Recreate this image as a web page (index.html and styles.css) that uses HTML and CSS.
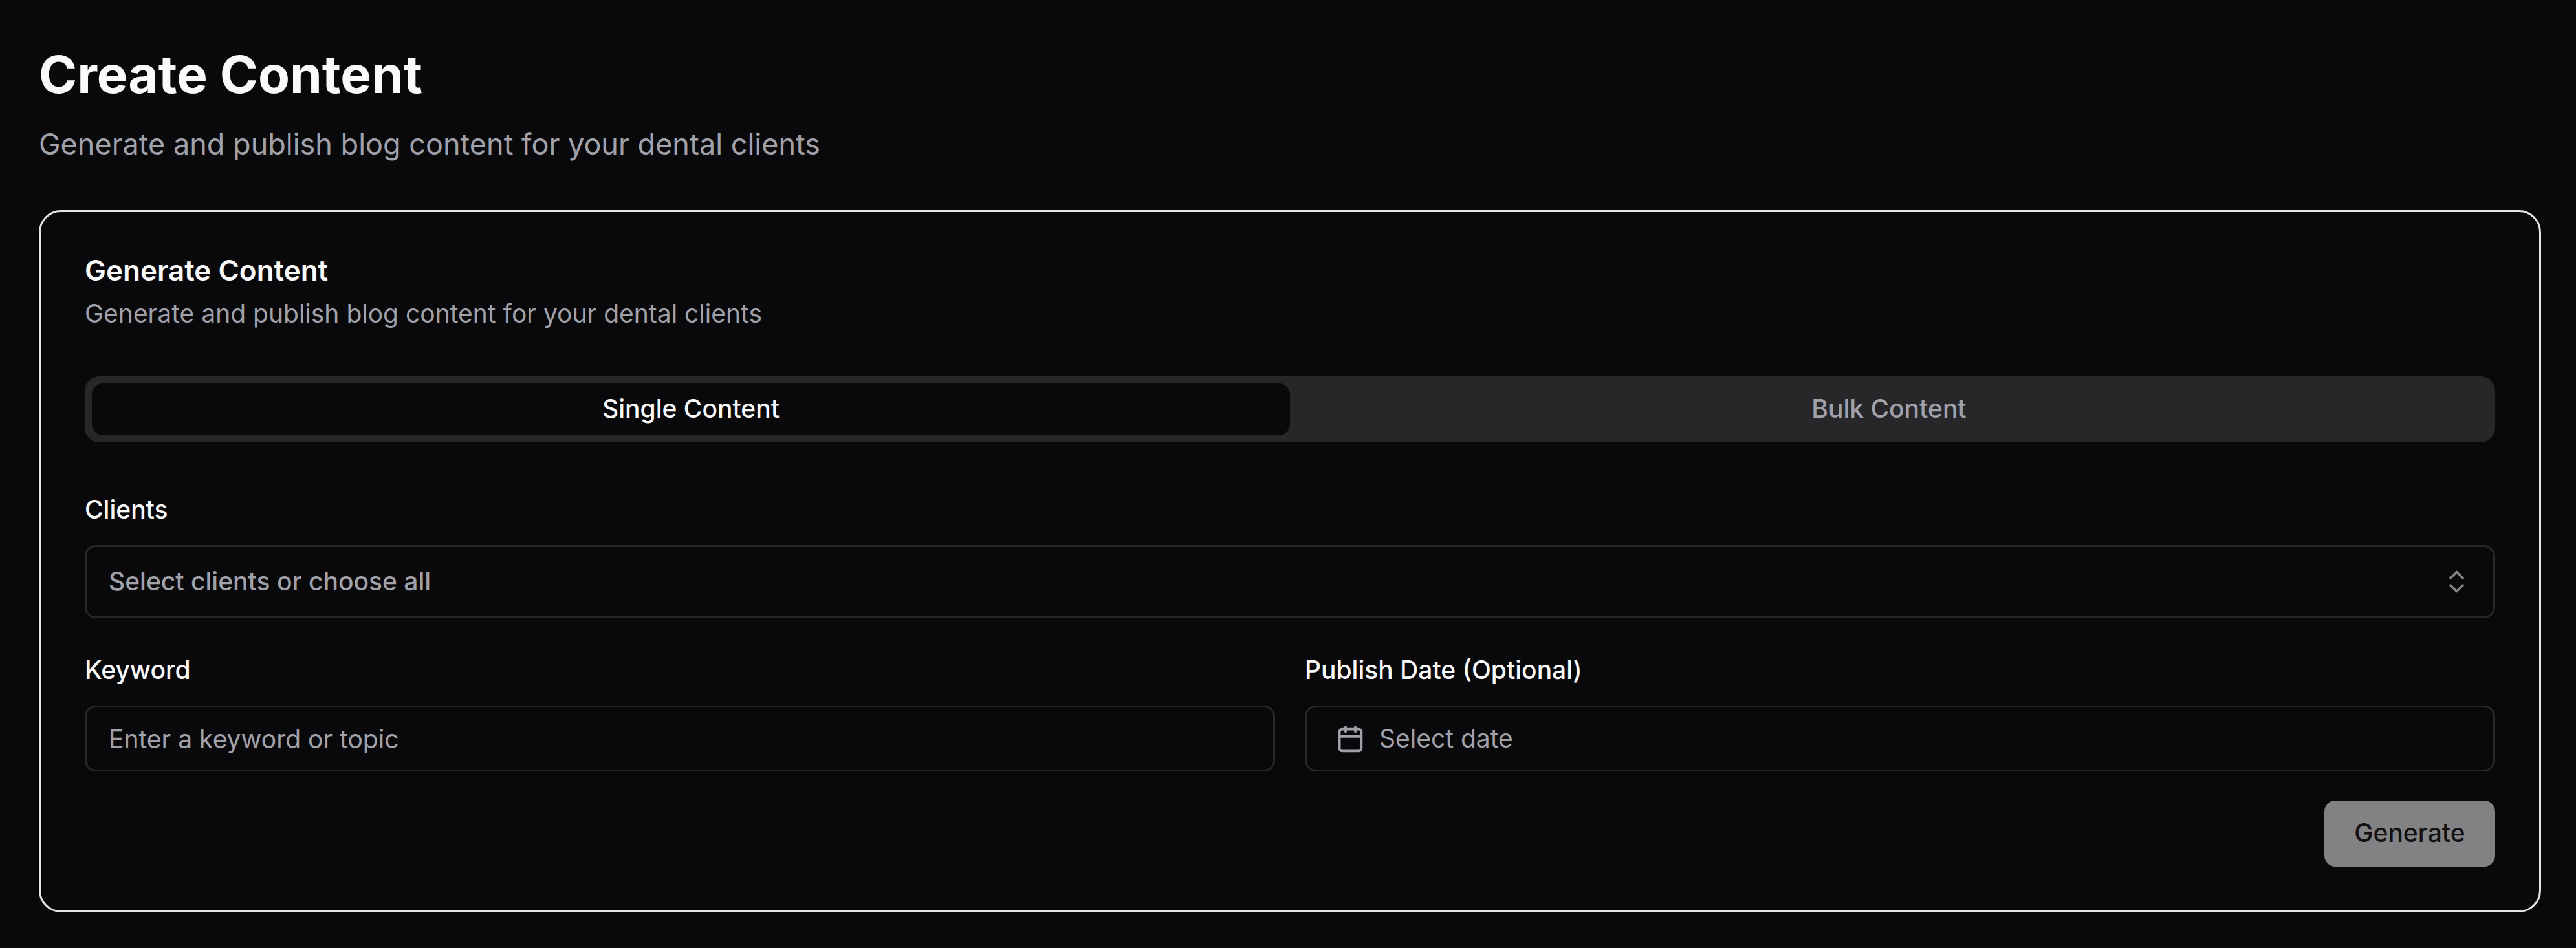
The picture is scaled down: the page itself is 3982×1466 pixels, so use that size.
FILE: index.html
```html
<!DOCTYPE html>
<html lang="en">
<head>
  <meta charset="utf-8">
  <meta name="viewport" content="width=device-width, initial-scale=1">
  <title>Create Content</title>
  <link rel="stylesheet" href="styles.css">
</head>
<body>
  <main class="page">
    <header class="page-header">
      <h1 class="page-title">Create Content</h1>
      <p class="page-subtitle">Generate and publish blog content for your dental clients</p>
    </header>

    <section class="card">
      <header class="card-header">
        <h2 class="card-title">Generate Content</h2>
        <p class="card-description">Generate and publish blog content for your dental clients</p>
      </header>

      <div class="tabs" role="tablist">
        <button class="tab tab-active" type="button" role="tab" aria-selected="true">Single Content</button>
        <button class="tab" type="button" role="tab" aria-selected="false">Bulk Content</button>
      </div>

      <form class="form">
        <div class="fields">
          <div class="field field-wide">
            <label class="label" for="clients">Clients</label>
            <div class="select">
              <select class="control select-input" id="clients">
                <option>Select clients or choose all</option>
              </select>
              <svg class="icon select-icon" viewBox="0 0 24 24" aria-hidden="true">
                <path d="m7 15 5 5 5-5"/>
                <path d="m7 9 5-5 5 5"/>
              </svg>
            </div>
          </div>

          <div class="field">
            <label class="label" for="keyword">Keyword</label>
            <input class="control" id="keyword" type="text" placeholder="Enter a keyword or topic">
          </div>

          <div class="field">
            <label class="label" for="publish-date">Publish Date (Optional)</label>
            <button class="control date-button" id="publish-date" type="button">
              <svg class="icon" viewBox="0 0 24 24" aria-hidden="true">
                <path d="M8 2v4"/>
                <path d="M16 2v4"/>
                <rect width="18" height="18" x="3" y="4" rx="2"/>
                <path d="M3 10h18"/>
              </svg>
              <span>Select date</span>
            </button>
          </div>
        </div>

        <div class="actions">
          <button class="submit" type="submit" disabled>Generate</button>
        </div>
      </form>
    </section>
  </main>
</body>
</html>
```
FILE: styles.css
```css
:root {
  --background: #09090b;
  --foreground: #fafafa;
  --muted: #27272a;
  --muted-foreground: #a1a1aa;
  --card-border: #e4e4e7;
}

*,
*::before,
*::after {
  box-sizing: border-box;
}

body {
  margin: 0;
  background: var(--background);
  color: var(--foreground);
  font-family: "Inter", "Liberation Sans", sans-serif;
  font-size: 39px;
  line-height: 56px;
}

h1,
h2,
p {
  margin: 0;
}

button,
input,
select {
  margin: 0;
  font: inherit;
  color: inherit;
}

.page {
  display: flex;
  flex-direction: column;
  gap: 68px;
  padding: 64px 54px 54px 60px;
}

.page-header {
  display: flex;
  flex-direction: column;
  gap: 23px;
}

.page-title {
  font-size: 80px;
  font-weight: 700;
  line-height: 102px;
}

.page-subtitle {
  color: var(--muted-foreground);
  font-size: 45px;
  line-height: 68px;
}

.card {
  display: flex;
  flex-direction: column;
  padding: 68px;
  border: 3px solid var(--card-border);
  border-radius: 34px;
}

.card-header {
  display: flex;
  flex-direction: column;
  gap: 17px;
  margin-bottom: 69px;
}

.card-title {
  font-size: 44px;
  font-weight: 600;
  line-height: 44px;
}

.card-description {
  color: var(--muted-foreground);
}

.tabs {
  display: grid;
  grid-template-columns: 1fr 1fr;
  margin-bottom: 84px;
  padding: 11px;
  border-radius: 22px;
  background: var(--muted);
}

.tab {
  height: 80px;
  padding: 0 34px 2px;
  border: 0;
  border-radius: 17px;
  background: transparent;
  color: var(--muted-foreground);
  font-weight: 500;
}

.tab-active {
  background: var(--background);
  color: var(--foreground);
}

.form {
  display: flex;
  flex-direction: column;
  gap: 45px;
}

.fields {
  display: grid;
  grid-template-columns: 1fr 1fr;
  gap: 60px 46px;
}

.field {
  display: flex;
  flex-direction: column;
  gap: 35px;
}

.field-wide {
  grid-column: 1 / -1;
}

.label {
  font-weight: 500;
  line-height: 40px;
}

.control {
  width: 100%;
  height: 102px;
  padding: 0 34px;
  border: 3px solid var(--muted);
  border-radius: 17px;
  background: transparent;
  color: var(--muted-foreground);
}

.control::placeholder {
  color: var(--muted-foreground);
  opacity: 1;
}

.select {
  display: grid;
  align-items: center;
}

.select-input,
.select-icon {
  grid-area: 1 / 1;
}

.select-input {
  height: 113px;
  padding-bottom: 2px;
  appearance: none;
  font-weight: 500;
}

.select-icon {
  justify-self: end;
  margin-right: 37px;
  color: var(--foreground);
  opacity: 0.5;
  pointer-events: none;
}

.date-button {
  display: flex;
  align-items: center;
  gap: 22px;
  padding: 0 45px;
  text-align: left;
}

.icon {
  flex: none;
  width: 45px;
  height: 45px;
  fill: none;
  stroke: currentColor;
  stroke-width: 2;
  stroke-linecap: round;
  stroke-linejoin: round;
}

.actions {
  display: flex;
  justify-content: flex-end;
}

.submit {
  min-width: 264px;
  height: 102px;
  padding: 0 45px 2px;
  border: 0;
  border-radius: 17px;
  background: #828284;
  color: #111113;
  font-weight: 500;
}
```
